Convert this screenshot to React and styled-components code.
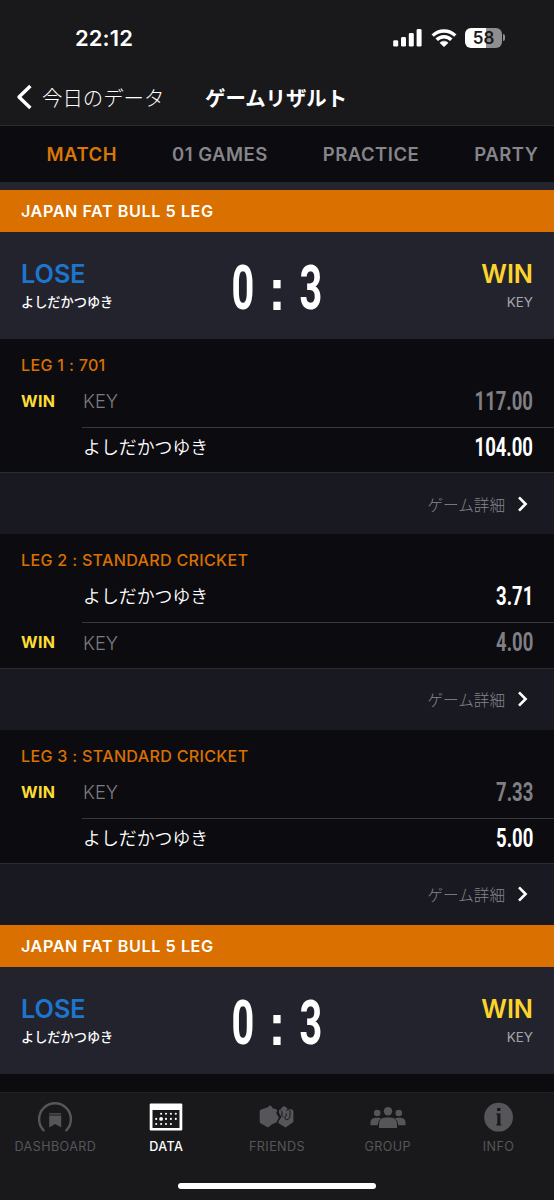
import React from "react";
import styled, { createGlobalStyle } from "styled-components";

const matches = [
  {
    id: 1,
    title: "JAPAN FAT BULL 5 LEG",
    legs: [
      {
        title: "LEG 1 : 701",
        players: [
          { name: "KEY", score: "117.00", win: true },
          { name: "よしだかつゆき", score: "104.00", me: true },
        ],
      },
      {
        title: "LEG 2 : STANDARD CRICKET",
        players: [
          { name: "よしだかつゆき", score: "3.71", me: true },
          { name: "KEY", score: "4.00", win: true },
        ],
      },
      {
        title: "LEG 3 : STANDARD CRICKET",
        players: [
          { name: "KEY", score: "7.33", win: true },
          { name: "よしだかつゆき", score: "5.00", me: true },
        ],
      },
    ],
  },
  { id: 2, title: "JAPAN FAT BULL 5 LEG", legs: [] },
];

const tabs = ["MATCH", "01 GAMES", "PRACTICE", "PARTY"];

const navItems = [
  { label: "DASHBOARD", icon: <DashboardIcon /> },
  { label: "DATA", icon: <DataIcon />, active: true },
  { label: "FRIENDS", icon: <FriendsIcon /> },
  { label: "GROUP", icon: <GroupIcon /> },
  { label: "INFO", icon: <InfoIcon /> },
];

export default function App() {
  return (
    <Screen>
      <GlobalStyle />
      <Header>
        <StatusBar>
          <Time>22:12</Time>
          <StatusIcons>
            <SignalIcon />
            <WifiIcon />
            <Battery>
              <BatteryBody>58</BatteryBody>
              <BatteryCap />
            </Battery>
          </StatusIcons>
        </StatusBar>
        <NavBar>
          <svg width="16" height="26" viewBox="0 0 16 26">
            <path
              d="M14.4 2 3 13l11.4 11"
              fill="none"
              stroke="#fff"
              strokeWidth="3.4"
              strokeLinejoin="round"
            />
          </svg>
          <BackLabel>今日のデータ</BackLabel>
          <PageTitle>ゲームリザルト</PageTitle>
        </NavBar>
      </Header>
      <Tabs>
        {tabs.map((tab, i) => (
          <Tab key={tab} $active={i === 0}>
            {tab}
          </Tab>
        ))}
      </Tabs>
      <Content>
        {matches.map((match) => (
          <Match key={match.id} match={match} />
        ))}
      </Content>
      <BottomBar>
        <BottomNav>
          {navItems.map((item) => (
            <NavItem key={item.label} $active={item.active}>
              <IconBox>{item.icon}</IconBox>
              {item.label}
            </NavItem>
          ))}
        </BottomNav>
        <HomeIndicator />
      </BottomBar>
    </Screen>
  );
}

function Match({ match }) {
  return (
    <section>
      <MatchTitle>{match.title}</MatchTitle>
      <ScoreBoard>
        <Side>
          <Result $color="#1d76ce">LOSE</Result>
          <SideName $me>よしだかつゆき</SideName>
        </Side>
        <BigScore>
          <BigDigit>0</BigDigit>
          <Colon>:</Colon>
          <BigDigit>3</BigDigit>
        </BigScore>
        <Side $right>
          <Result $color="#fcd42c">WIN</Result>
          <SideName>KEY</SideName>
        </Side>
      </ScoreBoard>
      {match.legs.map((leg) => (
        <div key={leg.title}>
          <Leg>
            <LegTitle>{leg.title}</LegTitle>
            {leg.players.map((player) => (
              <Row key={player.name}>
                <WinMark>{player.win && "WIN"}</WinMark>
                <RowBody>
                  <PlayerName $me={player.me}>{player.name}</PlayerName>
                  <Score $me={player.me}>{player.score}</Score>
                </RowBody>
              </Row>
            ))}
          </Leg>
          <Detail>
            ゲーム詳細
            <svg width="12" height="18" viewBox="0 0 12 18">
              <path
                d="m2 2.300 6.600 6.700-6.600 6.700"
                fill="none"
                stroke="#fff"
                strokeWidth="2.6"
              />
            </svg>
          </Detail>
        </div>
      ))}
    </section>
  );
}

function SignalIcon() {
  return (
    <svg width="30" height="20" viewBox="0 0 30 20" fill="#fff">
      <rect x="0.2" y="12.2" width="5" height="6.4" rx="1.4" />
      <rect x="8" y="9" width="5" height="9.6" rx="1.4" />
      <rect x="15.8" y="5" width="5" height="13.6" rx="1.4" />
      <rect x="23.6" y="1" width="5" height="17.6" rx="1.4" />
    </svg>
  );
}

function WifiIcon() {
  return (
    <svg width="26" height="20" viewBox="0 0 26 20">
      <g fill="none" stroke="#fff" strokeWidth="3.4">
        <path d="M1.7 7.6a16 16 0 0 1 22.6 0" />
        <path d="M5.7 11.8a10.3 10.3 0 0 1 14.6 0" />
      </g>
      <path
        d="M13 18.7 8.9 14.8a5.9 5.9 0 0 1 8.2 0z"
        fill="#fff"
        stroke="#fff"
        strokeWidth="0.6"
        strokeLinejoin="round"
      />
    </svg>
  );
}

function DashboardIcon() {
  return (
    <svg width="36" height="32" viewBox="0 0 36 32">
      <path
        d="M6.6 29.3A15.9 15.9 0 1 1 29.4 29.3"
        fill="none"
        stroke="currentColor"
        strokeWidth="2.4"
        strokeLinecap="round"
      />
      <path
        d="M12.2 12.3h12v1.1h-12zM12.2 14.6h12v12l-6-3.6-6 3.6z"
        fill="currentColor"
      />
    </svg>
  );
}

function DataIcon() {
  // calendar days, one array of columns per week
  const weeks = [
    [1, 2, 3, 4],
    [0, 1, 2, 3, 4],
    [0, 1, 2, 3],
  ];
  return (
    <svg width="34" height="28" viewBox="0 0 34 28" fill="currentColor">
      <path
        fillRule="evenodd"
        d="M1.7.5h30.6a1 1 0 0 1 1 1v25a1 1 0 0 1-1 1H1.7a1 1 0 0 1-1-1v-25a1 1 0 0 1 1-1zM3.5 7v18h27V7z"
      />
      {weeks.map((days, y) =>
        days.map((x) => (
          <circle
            key={`${x}-${y}`}
            cx={7.2 + x * 4.9}
            cy={10.8 + y * 5.1}
            r={x === 1 && y === 1 ? 1.9 : 1.05}
          />
        ))
      )}
    </svg>
  );
}

function FriendsIcon() {
  return (
    <svg width="36" height="26" viewBox="0 0 36 26" fill="currentColor">
      <path d="M9 3.3Q10.900.2 12.700 2.700L14 4.600q4.300.3 4.100 2.400l-.8 2.300 2.600 4.300-2.600 5-4.300 1.600-3.300 2.800Q8.600 23.800 7.300 22.500L1.500 19.200Q.7 18.600.7 17.500V7q0-1.200 1.500-1.600z" />
      <path d="M19.900 6.300l2.200-1.500Q24.600 1 26.800 3l1.600 1.800 4.600.8q1.400.3 1.400 1.900v10.600l-7.900 5.300-7.300-4.300.7-2.500 2.600-3.700-2.500-3.900z" />
      <path
        d="M21.600 6.200q2.400 1 1.300 3.800-.7 2 1.500 2.500m3.100-5.500q.2-1.700 1.900-1.600 2 .3 1.700 3.100l-.3 4.200q-.6 3-3 3-2.100-.2-2.100-2.600 1.900-.7 1.800-3.600"
        fill="none"
        stroke="#19191b"
        strokeWidth="1"
      />
    </svg>
  );
}

function GroupIcon() {
  return (
    <svg width="36" height="26" viewBox="0 0 36 26" fill="currentColor">
      <circle cx="7.2" cy="9" r="3.3" />
      <circle cx="28.8" cy="9" r="3.3" />
      <path d="M.5 21.2v-2.600q0-4.800 5.500-4.800h2.500q1.700 0 2.600.6-3.200 2.200-3.400 6.800z" />
      <path d="M35.5 21.2v-2.600q0-4.800-5.500-4.800h-2.500q-1.700 0-2.600.6 3.200 2.200 3.400 6.800z" />
      <circle cx="18" cy="7.3" r="4.2" />
      <path d="M9 24v-3.300q0-7.200 6.500-7.200h5q6.500 0 6.500 7.200v3.300z" />
    </svg>
  );
}

function InfoIcon() {
  return (
    <svg width="30" height="30" viewBox="0 0 30 30">
      <circle cx="14.6" cy="15.2" r="14.4" fill="currentColor" />
      <path
        d="M13.1 6h3.300v2.900h-3.300zM12.300 11.600h4.100v10.600h1v1.200h-5.100v-1.200h1v-9.400h-1z"
        fill="#19191b"
      />
    </svg>
  );
}

const GlobalStyle = createGlobalStyle`
  * {
    box-sizing: border-box;
  }
  body {
    margin: 0;
    background: #0c0b10;
  }
  svg {
    display: block;
    flex-shrink: 0;
  }
`;

const Screen = styled.div`
  width: 554px;
  height: 1200px;
  display: flex;
  flex-direction: column;
  overflow: hidden;
  background: #0c0b10;
  color: #fff;
  font-family: Inter, "Noto Sans CJK JP", sans-serif;
  white-space: nowrap;
`;

const Header = styled.header`
  height: 126px;
  flex-shrink: 0;
  background: #19191b;
  border-bottom: 1px solid #2b2b30;
`;

const StatusBar = styled.div`
  height: 75px;
  display: flex;
  justify-content: space-between;
  padding: 0 49px 0 75px;
`;

const Time = styled.div`
  padding-top: 23px;
  font-size: 22px;
  line-height: 30px;
  font-weight: 600;
  letter-spacing: 0.1px;
`;

const StatusIcons = styled.div`
  display: flex;
  align-items: center;
  gap: 8px;
`;

const Battery = styled.div`
  display: flex;
  align-items: center;
  gap: 1px;
`;

const BatteryBody = styled.div`
  width: 37px;
  height: 20px;
  border-radius: 6px;
  background: linear-gradient(to right, #fff 58%, #8e8e90 58%);
  color: #19191b;
  font-size: 17px;
  line-height: 20px;
  font-weight: 600;
  text-align: center;
`;

const BatteryCap = styled.div`
  width: 2px;
  height: 7px;
  border-radius: 0 2px 2px 0;
  background: #8e8e90;
`;

const NavBar = styled.div`
  height: 44px;
  display: flex;
  align-items: center;
  padding-left: 16px;
`;

const BackLabel = styled.div`
  width: 162px;
  padding-left: 10px;
  font-size: 20.4px;
  font-weight: 300;
`;

const PageTitle = styled.h1`
  margin: 0;
  padding-left: 11px;
  font-size: 20.4px;
  font-weight: 600;
`;

const Tabs = styled.nav`
  height: 56px;
  flex-shrink: 0;
  display: flex;
  align-items: center;
  gap: 55px;
  padding-left: 46.5px;
`;

const Tab = styled.div`
  color: ${(props) => (props.$active ? "#d97706" : "#85858a")};
  font-size: 18.5px;
  font-weight: 600;
  letter-spacing: 0.5px;
`;

const Content = styled.main`
  flex: 1;
  min-height: 0;
  overflow: hidden;
  border-top: 8px solid #23242e;
`;

const MatchTitle = styled.h2`
  height: 42px;
  margin: 0;
  padding-left: 21px;
  background: #d97000;
  font-size: 16.2px;
  line-height: 42px;
  font-weight: 600;
  letter-spacing: 0.55px;
`;

const ScoreBoard = styled.div`
  height: 107px;
  display: flex;
  justify-content: space-between;
  padding: 0 21px;
  background: #23232e;
`;

const Side = styled.div`
  width: 120px;
  padding-top: 27px;
  text-align: ${(props) => (props.$right ? "right" : "left")};
`;

const Result = styled.div`
  color: ${(props) => props.$color};
  font-size: 25.2px;
  line-height: 31px;
  font-weight: 600;
`;

const SideName = styled.div`
  margin-top: 2px;
  color: ${(props) => (props.$me ? "#fff" : "#a5a5ab")};
  font-size: ${(props) => (props.$me ? "13.2px" : "13.5px")};
  line-height: 20px;
  font-weight: ${(props) => (props.$me ? 500 : 400)};
`;

const BigScore = styled.div`
  display: flex;
  justify-content: space-between;
  width: 95.5px;
  padding-top: 19px;
`;

const BigDigit = styled.span`
  width: 28px;
  display: flex;
  justify-content: center;
  font-family: Roboto, sans-serif;
  font-size: 62px;
  line-height: 74px;
  font-weight: 700;
  transform: scaleX(0.64);
`;

const Colon = styled(BigDigit)`
  font-family: "Liberation Sans", sans-serif;
  font-size: 60px;
  line-height: 77px;
  transform: scaleX(0.85);
`;

const Leg = styled.div`
  height: 134.33px;
  border-bottom: 1px solid #2c2c33;
`;

const LegTitle = styled.h3`
  height: 36px;
  margin: 0;
  padding: 16px 0 0 21px;
  color: #d97000;
  font-size: 16.1px;
  line-height: 20px;
  font-weight: 500;
  letter-spacing: 0.3px;
`;

const Row = styled.div`
  display: flex;
  padding-left: 21px;
  height: 52px;
  line-height: 53px;

  & + & {
    height: 40px;
    line-height: 40px;
  }
`;

const WinMark = styled.div`
  width: 61px;
  color: #fcdc35;
  font-size: 16px;
  font-weight: 700;
  letter-spacing: 0.3px;
`;

const RowBody = styled.div`
  flex: 1;
  display: flex;
  justify-content: space-between;
  padding: 0 21px 0 1px;

  ${Row} + ${Row} & {
    border-top: 1px solid #38383c;
  }
`;

const PlayerName = styled.div`
  color: ${(props) => (props.$me ? "#fff" : "#7b7b80")};
  font-size: ${(props) => (props.$me ? "17.9px" : "18.4px")};
  font-weight: 350;
`;

const Score = styled.div`
  color: ${(props) => (props.$me ? "#fff" : "#7f7f84")};
  font-family: Roboto, sans-serif;
  font-size: 25px;
  font-weight: 700;
  transform: scaleX(0.74);
  transform-origin: right;
`;

const Detail = styled.div`
  height: 61px;
  display: flex;
  align-items: center;
  justify-content: flex-end;
  gap: 12px;
  padding-right: 25px;
  background: #191921;
  color: #85858b;
  font-size: 15.6px;
  font-weight: 300;
`;

const BottomBar = styled.footer`
  height: 108px;
  flex-shrink: 0;
  display: flex;
  flex-direction: column;
  align-items: center;
  background: #19191b;
  border-top: 1px solid #222226;
`;

const BottomNav = styled.nav`
  width: 100%;
  height: 90px;
  display: grid;
  grid-template-columns: repeat(5, 1fr);
`;

const NavItem = styled.div`
  display: flex;
  flex-direction: column;
  align-items: center;
  padding-top: 6px;
  color: ${(props) => (props.$active ? "#fff" : "#56565a")};
  font-size: 12.6px;
  line-height: 20px;
  font-weight: ${(props) => (props.$active ? 500 : 400)};
  letter-spacing: 0.4px;
`;

const IconBox = styled.div`
  height: 36px;
  margin-bottom: 2px;
  display: flex;
  align-items: center;
`;

const HomeIndicator = styled.div`
  width: 198px;
  height: 6px;
  border-radius: 3px;
  background: #fff;
`;
